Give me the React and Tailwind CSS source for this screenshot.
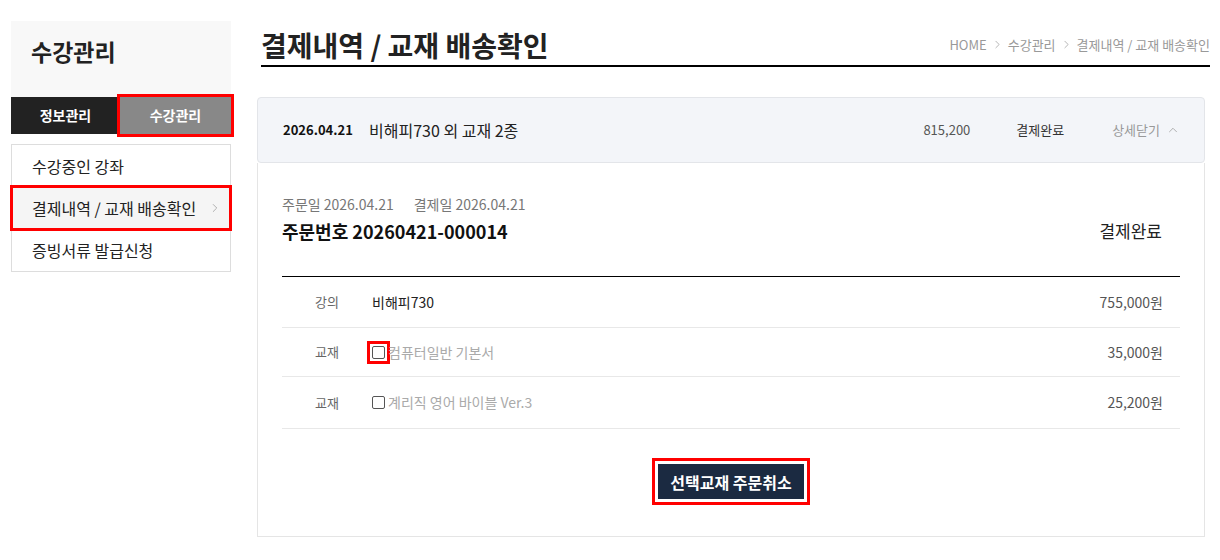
import React from 'react';
import { ChevronRight, ChevronUp } from 'lucide-react';

const font = { fontFamily: '"Noto Sans CJK KR", "Noto Sans", sans-serif' };

const menu = [
  { label: '수강중인 강좌' },
  { label: '결제내역 / 교재 배송확인', active: true },
  { label: '증빙서류 발급신청' },
];

const items = [
  { type: '강의', name: '비해피730', price: '755,000원', h: 'h-[51px]' },
  { type: '교재', name: '컴퓨터일반 기본서', price: '35,000원', check: true, mark: true, h: 'h-[49px]' },
  { type: '교재', name: '계리직 영어 바이블 Ver.3', price: '25,200원', check: true, h: 'h-[52px]' },
];

const Sidebar = () => (
  <aside className="w-[220px] shrink-0 mt-[21px]">
    <div className="h-[76px] bg-[#f8f8f8] px-5 pt-[15px]">
      <h2 className="text-[23px] leading-[30px] font-bold text-[#222]">수강관리</h2>
    </div>
    <div className="flex h-[37px] text-[14px] font-bold text-white">
      <div className="w-[109px] bg-[#222] flex items-center justify-center">정보관리</div>
      <div className="flex-1 bg-[#888] flex items-center justify-center outline-[3px] outline-solid outline-[#f00]">
        수강관리
      </div>
    </div>
    <ul className="mt-[10px] border border-[#ddd]">
      {menu.map((m) => (
        <li
          key={m.label}
          className={`h-[42px] pl-5 pr-2 flex items-center justify-between text-[16px] text-[#222] ${
            m.active ? 'bg-[#f5f5f5] outline-[3px] outline-solid outline-[#f00] -outline-offset-1' : ''
          }`}
        >
          <span>{m.label}</span>
          {m.active && <ChevronRight size={14} strokeWidth={1.3} className="text-[#999]" />}
        </li>
      ))}
    </ul>
  </aside>
);

const Checkbox = ({ mark }) => (
  <span
    className={`inline-flex items-center justify-center mr-[3px] ${
      mark ? 'outline-[3px] outline-solid outline-[#f00] outline-offset-[2px]' : ''
    }`}
  >
    <span className="block w-[13px] h-[13px] border border-[#555] rounded-[2px] bg-white" />
  </span>
);

export default function App() {
  return (
    <div className="w-[1220px] h-[560px] bg-white flex pl-[11px] pr-[10px] overflow-hidden" style={font}>
      <Sidebar />
      <main className="flex-1 ml-[26px]">
        <div className="ml-1 mt-[27px] flex items-end justify-between border-b-2 border-black pb-[2px]">
          <h1 className="text-[28px] leading-[36px] font-bold text-[#222]">결제내역 / 교재 배송확인</h1>
          <div className="flex items-center gap-[4px] text-[13px] text-[#999] mb-[9px]">
            <span>HOME</span>
            <ChevronRight size={13} strokeWidth={1.3} />
            <span>수강관리</span>
            <ChevronRight size={13} strokeWidth={1.3} />
            <span>결제내역 / 교재 배송확인</span>
          </div>
        </div>

        <section className="mt-[30px] mr-[5px]">
          <div className="h-[66px] bg-[#f3f5f9] border border-[#e3e5e9] rounded-[4px] flex items-center pl-[25px] pr-[24px]">
            <span className="text-[13px] font-bold text-[#111] w-[86px]">2026.04.21</span>
            <span className="text-[16px] text-[#222]">비해피730 외 교재 2종</span>
            <span className="ml-auto text-[13px] text-[#555]">815,200</span>
            <span className="ml-[46px] text-[13px] text-[#333]">결제완료</span>
            <span className="ml-[48px] flex items-center gap-[6px] text-[13px] text-[#999]">
              상세닫기 <ChevronUp size={14} strokeWidth={1.3} />
            </span>
          </div>

          <div className="border border-t-0 border-[#e5e5e5] px-[24px] pt-[31px] pb-[37px]">
            <div className="text-[14px] leading-[20px] text-[#777]">
              주문일 2026.04.21<span className="ml-[20px]">결제일 2026.04.21</span>
            </div>
            <div className="mt-[4px] flex items-center justify-between pr-[18px]">
              <span className="text-[18px] leading-[26px] font-bold text-[#111]">주문번호 20260421-000014</span>
              <span className="text-[17px] text-[#222]">결제완료</span>
            </div>

            <div className="mt-[32px] border-t border-black">
              {items.map((it, i) => (
                <div key={i} className={`${it.h} border-b border-[#e8e8e8] flex items-center pr-[17px]`}>
                  <span className="w-[90px] pl-[33px] text-[13px] text-[#666]">{it.type}</span>
                  {it.check ? (
                    <span className="flex items-center text-[14px] text-[#aaa]">
                      <Checkbox mark={it.mark} />
                      {it.name}
                    </span>
                  ) : (
                    <span className="text-[14px] text-[#222]">{it.name}</span>
                  )}
                  <span className="ml-auto text-[14px] text-[#555]">{it.price}</span>
                </div>
              ))}
            </div>

            <div className="mt-[35px] flex justify-center">
              <button
                type="button"
                className="w-[146px] h-[35px] bg-[#1b2a41] text-white text-[16px] font-bold outline-[3px] outline-solid outline-[#f00] outline-offset-[3px]"
              >
                선택교재 주문취소
              </button>
            </div>
          </div>
        </section>
      </main>
    </div>
  );
}
